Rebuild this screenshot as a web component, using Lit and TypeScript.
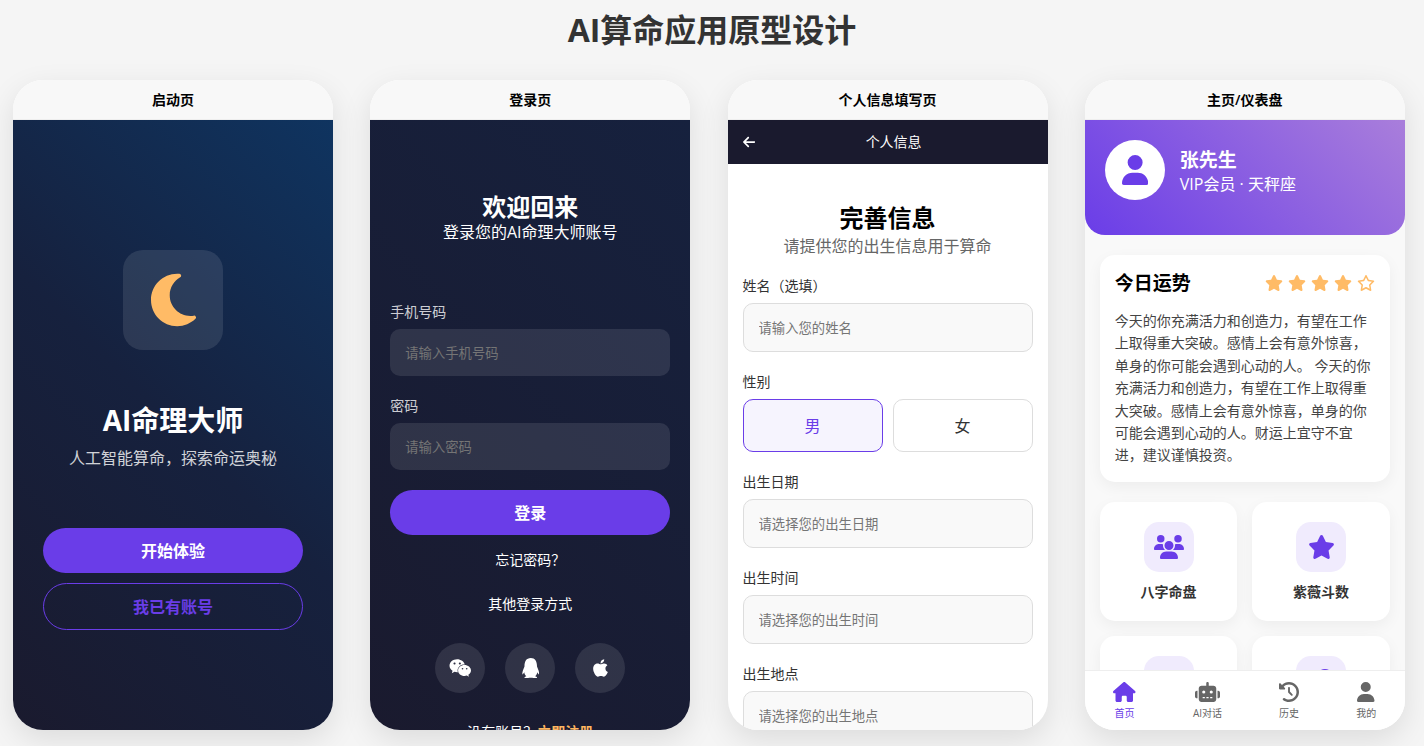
import { LitElement, html, svg, css } from "lit";
import { customElement, property, state } from "lit/decorators.js";
import { classMap } from "lit/directives/class-map.js";

interface Glyph {
  w: number;
  d: string;
}

const GLYPHS: Record<string, Glyph> = {
  moon: { w: 384, d: "M223.5 32C100 32 0 132.3 0 256S100 480 223.5 480c60.6 0 115.5-24.2 155.8-63.4c5-4.9 6.3-12.5 3.1-18.7s-10.1-9.7-17-8.5c-9.8 1.7-19.8 2.6-30.1 2.6c-96.9 0-175.5-78.8-175.5-176c0-65.8 36-123.1 89.3-153.3c6.1-3.5 9.2-10.5 7.7-17.3s-7.3-11.9-14.3-12.5c-6.3-.5-12.6-.8-19-.8z" },
  users: { w: 640, d: "M144 0a80 80 0 1 1 0 160A80 80 0 1 1 144 0zM512 0a80 80 0 1 1 0 160A80 80 0 1 1 512 0zM0 298.7C0 239.8 47.8 192 106.7 192l42.7 0c15.9 0 31 3.5 44.6 9.7c-1.3 7.2-1.9 14.7-1.9 22.3c0 38.2 16.8 72.5 43.3 96c-.2 0-.4 0-.7 0L21.3 320C9.6 320 0 310.4 0 298.7zM405.3 320c-.2 0-.4 0-.7 0c26.6-23.5 43.3-57.8 43.3-96c0-7.6-.7-15-1.9-22.3c13.6-6.3 28.7-9.7 44.6-9.7l42.7 0C592.2 192 640 239.8 640 298.7c0 11.8-9.6 21.3-21.3 21.3l-213.3 0zM224 224a96 96 0 1 1 192 0 96 96 0 1 1 -192 0zM128 485.3C128 411.7 187.7 352 261.3 352l117.3 0C452.3 352 512 411.7 512 485.3c0 14.7-11.9 26.7-26.7 26.7l-330.7 0c-14.7 0-26.7-11.9-26.7-26.7z" },
  star: { w: 576, d: "M316.9 18C311.6 7 300.4 0 288.1 0s-23.4 7-28.8 18L195 150.3 51.4 171.5c-12 1.8-22 10.2-25.7 21.7s-.7 24.2 7.9 32.7L137.8 329 113.2 474.7c-2 12 3 24.2 12.9 31.3s23 8 33.8 2.3l128.3-68.5 128.3 68.5c10.8 5.7 23.9 4.9 33.8-2.3s14.9-19.3 12.9-31.3L438.5 329 542.7 225.9c8.6-8.5 11.7-21.2 7.9-32.7s-13.7-19.9-25.7-21.7L381.2 150.3 316.9 18z" },
  starOutline: { w: 576, d: "M287.9 0c9.2 0 17.6 5.2 21.6 13.5l68.6 141.3 153.2 22.6c9 1.3 16.5 7.6 19.3 16.3s.5 18.1-5.9 24.5L433.6 328.4l26.2 155.6c1.5 9-2.2 18.1-9.7 23.5s-17.3 6-25.3 1.7l-137-73.2L151 509.1c-8.1 4.3-17.9 3.7-25.3-1.7s-11.2-14.5-9.7-23.5l26.2-155.6L31.1 218.2c-6.5-6.4-8.7-15.9-5.9-24.5s10.3-14.9 19.3-16.3l153.2-22.6L266.3 13.5C270.4 5.2 278.7 0 287.9 0zm0 79L235.4 187.2c-3.5 7.1-10.2 12.1-18.1 13.3L99 217.9 184.9 303c5.5 5.5 8.1 13.3 6.8 21L171.4 443.7l105.2-56.2c7.1-3.8 15.6-3.8 22.6 0l105.2 56.2L384.2 324.1c-1.3-7.7 1.2-15.5 6.8-21l85.9-85.1L358.6 200.5c-7.8-1.2-14.6-6.1-18.1-13.3L287.9 79z" },
  user: { w: 448, d: "M224 256A128 128 0 1 0 224 0a128 128 0 1 0 0 256zm-45.7 48C79.8 304 0 383.8 0 482.3C0 498.7 13.3 512 29.7 512l388.6 0c16.4 0 29.7-13.3 29.7-29.7C448 383.8 368.2 304 269.7 304l-91.4 0z" },
  home: { w: 576, d: "M575.8 255.5c0 18-15 32.1-32 32.1l-32 0 .7 160.2c0 2.7-.2 5.4-.5 8.1l0 16.2c0 22.1-17.9 40-40 40l-16 0c-1.1 0-2.2 0-3.3-.1c-1.4 .1-2.8 .1-4.2 .1L416 512l-24 0c-22.1 0-40-17.9-40-40l0-24 0-64c0-17.7-14.3-32-32-32l-64 0c-17.7 0-32 14.3-32 32l0 64 0 24c0 22.1-17.9 40-40 40l-24 0-31.9 0c-1.5 0-3-.1-4.5-.2c-1.2 .1-2.4 .2-3.6 .2l-16 0c-22.1 0-40-17.9-40-40l0-112c0-.9 0-1.9 .1-2.8l0-69.7-32 0c-18 0-32-14-32-32.1c0-9 3-17 10-24L266.4 8c7-7 15-8 22-8s15 2 21 7L564.8 231.5c8 7 12 15 11 24z" },
  robot: { w: 640, d: "M320 0c17.7 0 32 14.3 32 32l0 64 120 0c39.8 0 72 32.2 72 72l0 272c0 39.8-32.2 72-72 72l-304 0c-39.8 0-72-32.2-72-72l0-272c0-39.8 32.2-72 72-72l120 0 0-64c0-17.7 14.3-32 32-32zM208 384c-8.8 0-16 7.2-16 16s7.2 16 16 16l32 0c8.8 0 16-7.2 16-16s-7.2-16-16-16l-32 0zm96 0c-8.8 0-16 7.2-16 16s7.2 16 16 16l32 0c8.8 0 16-7.2 16-16s-7.2-16-16-16l-32 0zm96 0c-8.8 0-16 7.2-16 16s7.2 16 16 16l32 0c8.8 0 16-7.2 16-16s-7.2-16-16-16l-32 0zM264 256a40 40 0 1 0 -80 0 40 40 0 1 0 80 0zm152 40a40 40 0 1 0 0-80 40 40 0 1 0 0 80zM48 224l16 0 0 192-16 0c-26.5 0-48-21.5-48-48l0-96c0-26.5 21.5-48 48-48zm544 0c26.5 0 48 21.5 48 48l0 96c0 26.5-21.5 48-48 48l-16 0 0-192 16 0z" },
  history: { w: 512, d: "M75 75L41 41C25.9 25.9 0 36.6 0 57.9L0 168c0 13.3 10.7 24 24 24l110.1 0c21.4 0 32.1-25.9 17-41l-30.8-30.8C155 85.5 203 64 256 64c106 0 192 86 192 192s-86 192-192 192c-40.8 0-78.6-12.7-109.7-34.4c-14.5-10.1-34.4-6.6-44.6 7.9s-6.6 34.4 7.9 44.6C151.2 495 201.7 512 256 512c141.4 0 256-114.6 256-256S397.4 0 256 0C185.3 0 121.3 28.7 75 75zm181 53c-13.3 0-24 10.7-24 24l0 104c0 6.4 2.5 12.5 7 17l72 72c9.4 9.4 24.6 9.4 33.9 0s9.4-24.6 0-33.9l-65-65 0-94.1c0-13.3-10.7-24-24-24z" },
  arrowLeft: { w: 448, d: "M9.4 233.4c-12.5 12.5-12.5 32.8 0 45.3l160 160c12.5 12.5 32.8 12.5 45.3 0s12.5-32.8 0-45.3L109.2 288 416 288c17.7 0 32-14.3 32-32s-14.3-32-32-32l-306.7 0L214.6 118.6c12.5-12.5 12.5-32.8 0-45.3s-32.8-12.5-45.3 0l-160 160z" },
  weixin: { w: 576, d: "M385.2 167.6c6.4 0 12.6.3 18.8 1.1C387.4 90.3 303.3 32 207.7 32 100.5 32 13 104.8 13 197.4c0 53.4 29.3 97.5 77.9 131.6l-19.3 58.6 68-34.1c24.4 4.8 43.8 9.7 68.2 9.7 6.2 0 12.1-.3 18.3-.8-4-12.9-6.2-26.6-6.2-40.8-.1-84.9 72.9-154 165.3-154zm-104.5-52.9c14.5 0 24.2 9.7 24.2 24.4 0 14.5-9.7 24.2-24.2 24.2-14.8 0-29.3-9.7-29.3-24.2.1-14.7 14.6-24.4 29.3-24.4zm-136.4 48.6c-14.5 0-29.3-9.7-29.3-24.2 0-14.8 14.8-24.4 29.3-24.4 14.8 0 24.4 9.7 24.4 24.4 0 14.6-9.6 24.2-24.4 24.2zM563 319.4c0-77.9-77.9-141.3-165.4-141.3-92.7 0-165.4 63.4-165.4 141.3S305 460.7 397.6 460.7c19.3 0 38.9-5.1 58.6-9.9l53.4 29.3-14.8-48.6C534 402.1 563 363.2 563 319.4zm-219.1-24.5c-9.7 0-19.3-9.7-19.3-19.6 0-9.7 9.7-19.3 19.3-19.3 14.8 0 24.4 9.7 24.4 19.3 0 10-9.7 19.6-24.4 19.6zm107.1 0c-9.7 0-19.3-9.7-19.3-19.6 0-9.7 9.7-19.3 19.3-19.3 14.5 0 24.4 9.7 24.4 19.3.1 10-9.9 19.6-24.4 19.6z" },
  qq: { w: 448, d: "M433.754 420.445c-11.526 1.393-44.86-52.741-44.86-52.741 0 31.345-16.136 72.247-51.051 101.786 16.842 5.192 54.843 19.167 45.803 34.421-7.316 12.343-125.51 7.881-159.632 4.037-34.122 3.844-152.316 8.306-159.632-4.037-9.045-15.25 28.918-29.214 45.783-34.415-34.92-29.539-51.059-70.445-51.059-101.792 0 0-33.334 54.134-44.859 52.741-5.37-.65-12.424-29.644 9.347-99.704 10.261-33.024 21.995-60.478 40.144-105.779C60.683 98.063 108.982.006 224 0c113.737.006 163.156 96.133 160.264 214.963 18.118 45.223 29.912 72.85 40.144 105.778 21.768 70.06 14.716 99.053 9.346 99.704z" },
  apple: { w: 384, d: "M318.7 268.7c-.2-36.7 16.4-64.4 50-84.8-18.8-26.9-47.2-41.7-84.7-44.6-35.5-2.8-74.3 20.7-88.5 20.7-15 0-49.4-19.7-76.4-19.7C63.3 141.2 4 184.8 4 273.5q0 39.3 14.4 81.2c12.8 36.7 59 126.7 107.2 125.2 25.2-.6 43-17.9 75.8-17.9 31.8 0 48.3 17.9 76.4 17.9 48.6-.7 90.4-82.5 102.6-119.3-65.2-30.7-61.7-90-61.7-91.9zm-56.6-164.2c27.3-32.4 24.8-61.9 24-72.5-24.1 1.4-52 16.4-67.9 34.9-17.5 19.8-27.8 44.3-25.6 71.9 26.1 2 49.9-11.4 69.5-34.3z" },
  orbit: { w: 512, d: "M340 0a180 180 0 1 1 0 360 180 180 0 1 1 0-360zM30 440l120-120 50 50-120 120z" },
};

@customElement("app-icon")
export class AppIcon extends LitElement {
  @property() name = "star";

  static styles = css`
    :host {
      display: inline-flex;
      font-size: 20px;
    }
    .glyph {
      display: block;
      height: 1em;
      fill: currentColor;
    }
  `;

  render() {
    const g = GLYPHS[this.name];
    return html`<svg class="glyph" viewBox="0 0 ${g.w} 512" aria-hidden="true">
      ${svg`<path d=${g.d}></path>`}
    </svg>`;
  }
}

@customElement("phone-frame")
export class PhoneFrame extends LitElement {
  @property() heading = "";

  static styles = css`
    :host {
      display: flex;
      flex-direction: column;
      width: 100%;
      max-width: 320px;
      height: 650px;
      border-radius: 30px;
      overflow: hidden;
      background: #fff;
      box-shadow: 0 10px 30px rgba(0, 0, 0, 0.1);
    }
    .caption {
      box-sizing: border-box;
      flex: none;
      height: 40px;
      margin: 0;
      border-bottom: 1px solid #eee;
      background: #f8f8f8;
      font-size: 14px;
      line-height: 39px;
      font-weight: 600;
      text-align: center;
      color: #000;
    }
    .screen {
      flex: 1;
      min-height: 0;
      display: flex;
      flex-direction: column;
      overflow: hidden;
    }
  `;

  render() {
    return html`
      <h2 class="caption">${this.heading}</h2>
      <div class="screen"><slot></slot></div>
    `;
  }
}

@customElement("app-root")
export class AppRoot extends LitElement {
  @state() private gender = "男";
  @state() private tab = "首页";

  static styles = css`
    :host {
      display: block;
      box-sizing: border-box;
      min-height: 100vh;
      padding: 10px 13px 16px;
      background: #f5f5f5;
      color: #000;
      font-family: "Open Sans", "Noto Sans CJK SC", sans-serif;
      font-size: 16px;
      line-height: 24px;
    }
    * {
      box-sizing: border-box;
    }
    h1,
    h3,
    p {
      margin: 0;
    }
    input,
    button {
      font-family: inherit;
    }
    button {
      cursor: pointer;
    }
    a {
      color: inherit;
      text-decoration: none;
    }
    .page-title {
      margin-bottom: 30px;
      font-size: 32px;
      line-height: 40px;
      text-align: center;
      color: #333;
    }
    .phones {
      display: grid;
      grid-template-columns: repeat(auto-fill, minmax(320px, 1fr));
      gap: 31px;
    }

    .splash,
    .login {
      flex: 1;
      display: flex;
      flex-direction: column;
      color: #fff;
    }
    .splash {
      align-items: center;
      padding: 130px 30px 0;
      background: linear-gradient(45deg, #1a1a2e, #16213e, #0f3460);
    }
    .logo {
      display: flex;
      align-items: center;
      justify-content: center;
      width: 100px;
      height: 100px;
      margin-bottom: 50px;
      border-radius: 20px;
      background: rgba(255, 255, 255, 0.1);
      color: #ffbb66;
    }
    .logo app-icon {
      font-size: 60px;
    }
    .splash-title {
      font-size: 28px;
      line-height: 40px;
    }
    .splash-sub {
      margin: 6px 0 58px;
      opacity: 0.8;
    }
    .btn {
      width: 100%;
      height: 45px;
      padding: 0;
      border: 0;
      border-radius: 25px;
      background: #6a3de8;
      color: #fff;
      font-size: 16px;
      line-height: 24px;
      font-weight: 600;
    }
    .btn.outline {
      height: 47px;
      margin-top: 10px;
      border: 1px solid #6a3de8;
      background: transparent;
      color: #6a3de8;
    }

    .login {
      padding: 74px 20px 0;
      background: linear-gradient(45deg, #1a1a2e, #16213e);
    }
    .intro {
      text-align: center;
    }
    .intro-title {
      font-size: 24px;
      line-height: 26px;
    }
    .login .intro {
      margin-bottom: 58px;
    }
    .field {
      display: flex;
      flex-direction: column;
      gap: 8px;
      margin-bottom: 20px;
    }
    .label {
      font-size: 14px;
      line-height: 19px;
      color: #333;
    }
    .login .label {
      color: rgba(255, 255, 255, 0.8);
    }
    .text {
      width: 100%;
      height: 49px;
      padding: 0 15px;
      border: 1px solid #ddd;
      border-radius: 10px;
      background: #f9f9f9;
      color: inherit;
    }
    .text::placeholder {
      color: #757575;
    }
    .login .text {
      height: 47px;
      border: 0;
      background: rgba(255, 255, 255, 0.1);
    }
    .note {
      margin-top: 15px;
      font-size: 14px;
      line-height: 19px;
      text-align: center;
    }
    .note.other {
      margin-top: 25px;
    }
    .socials {
      display: flex;
      justify-content: center;
      gap: 20px;
      margin: 30px 0 14px;
    }
    .social {
      display: flex;
      align-items: center;
      justify-content: center;
      width: 50px;
      height: 50px;
      padding: 0;
      border: 0;
      border-radius: 50%;
      background: rgba(255, 255, 255, 0.1);
      color: #fff;
    }
    .register {
      font-weight: 600;
      color: #ffb660;
    }

    .bar {
      flex: none;
      display: flex;
      align-items: center;
      justify-content: space-between;
      height: 44px;
      padding: 0 15px;
      background: #1a1a2e;
      color: #fff;
      font-size: 14px;
    }
    .back {
      display: flex;
      padding: 0;
      border: 0;
      background: none;
      color: inherit;
    }
    .back app-icon {
      font-size: 14px;
    }
    .form {
      flex: none;
      padding: 38px 15px 0;
    }
    .form .intro {
      margin-bottom: 18px;
    }
    .form .intro-title {
      line-height: 32px;
    }
    .form .intro p {
      color: #666;
    }
    .choices {
      display: flex;
      gap: 10px;
    }
    .choice {
      flex: 1;
      display: flex;
      align-items: center;
      justify-content: center;
      height: 53px;
      border: 1px solid #ddd;
      border-radius: 10px;
      color: #333;
      cursor: pointer;
    }
    .choice.on {
      border-color: #6a3de8;
      background: #f6f4fe;
      color: #6a3de8;
    }
    .choice input {
      appearance: none;
      width: 0;
      height: 0;
      margin: 0;
    }

    .home {
      flex: 1;
      min-height: 0;
      overflow: hidden;
      background: #f9f9f9;
    }
    .profile {
      display: flex;
      gap: 15px;
      height: 115px;
      padding: 20px;
      border-radius: 0 0 20px 20px;
      background: linear-gradient(45deg, #6a3de8, #a97edb);
      color: #fff;
    }
    .avatar {
      display: flex;
      align-items: center;
      justify-content: center;
      width: 60px;
      height: 60px;
      border-radius: 50%;
      background: #fff;
      color: #6a3de8;
    }
    .avatar app-icon {
      font-size: 30px;
    }
    .who {
      padding-top: 8px;
    }
    .name,
    .card-title {
      font-size: 19px;
      line-height: 24px;
    }
    .card,
    .tile {
      border-radius: 15px;
      background: #fff;
      box-shadow: 0 5px 15px rgba(0, 0, 0, 0.05);
    }
    .card {
      margin: 20px 15px;
      padding: 15px;
    }
    .card-head {
      display: flex;
      align-items: center;
      justify-content: space-between;
      margin-bottom: 14px;
    }
    .card-head h3 {
      line-height: 26px;
    }
    .stars {
      display: flex;
      gap: 5px;
      color: #ffbb66;
    }
    .stars app-icon {
      font-size: 16px;
    }
    .fortune {
      font-size: 14px;
      line-height: 1.6;
      color: #444;
    }
    .tiles {
      display: grid;
      grid-template-columns: 1fr 1fr;
      gap: 15px;
      padding: 0 15px;
    }
    .tile {
      display: flex;
      flex-direction: column;
      align-items: center;
      gap: 10px;
      height: 119px;
      padding: 20px 0;
      border: 0;
      color: #333;
      font-size: 14px;
      line-height: 19px;
      font-weight: 600;
    }
    .tile-icon {
      display: flex;
      align-items: center;
      justify-content: center;
      width: 50px;
      height: 50px;
      border-radius: 15px;
      background: #f0ebfd;
      color: #6a3de8;
    }
    .tile-icon app-icon {
      font-size: 24px;
    }
    .tabs {
      flex: none;
      display: flex;
      align-items: center;
      justify-content: space-around;
      height: 60px;
      border-top: 1px solid #eee;
      background: #fff;
    }
    .tab {
      display: flex;
      flex-direction: column;
      align-items: center;
      gap: 4px;
      padding: 0;
      border: 0;
      background: none;
      color: #666;
      font-size: 10px;
      line-height: 14px;
    }
    .tab.on {
      color: #6a3de8;
    }
  `;

  private field(id: string, label: string, hint: string, type = "text") {
    return html`
      <div class="field">
        <label class="label" for=${id}>${label}</label>
        <input class="text" id=${id} type=${type} placeholder=${hint} />
      </div>
    `;
  }

  private splash() {
    return html`
      <phone-frame heading="启动页">
        <div class="splash">
          <div class="logo"><app-icon name="moon"></app-icon></div>
          <h3 class="splash-title">AI命理大师</h3>
          <p class="splash-sub">人工智能算命，探索命运奥秘</p>
          <button class="btn">开始体验</button>
          <button class="btn outline">我已有账号</button>
        </div>
      </phone-frame>
    `;
  }

  private login() {
    const socials = [
      ["weixin", "微信"],
      ["qq", "QQ"],
      ["apple", "Apple"],
    ];
    return html`
      <phone-frame heading="登录页">
        <div class="login">
          <div class="intro">
            <h3 class="intro-title">欢迎回来</h3>
            <p>登录您的AI命理大师账号</p>
          </div>
          ${this.field("phone", "手机号码", "请输入手机号码", "tel")}
          ${this.field("password", "密码", "请输入密码", "password")}
          <button class="btn">登录</button>
          <p class="note"><a href="#forgot">忘记密码？</a></p>
          <p class="note other">其他登录方式</p>
          <div class="socials">
            ${socials.map(
              ([icon, label]) => html`
                <button class="social" aria-label=${label}>
                  <app-icon name=${icon}></app-icon>
                </button>
              `
            )}
          </div>
          <p class="note">没有账号？<a class="register" href="#register">立即注册</a></p>
        </div>
      </phone-frame>
    `;
  }

  private info() {
    return html`
      <phone-frame heading="个人信息填写页">
        <div class="bar">
          <button class="back" aria-label="返回"><app-icon name="arrowLeft"></app-icon></button>
          <span>个人信息</span>
          <span></span>
        </div>
        <div class="form">
          <div class="intro">
            <h3 class="intro-title">完善信息</h3>
            <p>请提供您的出生信息用于算命</p>
          </div>
          ${this.field("name", "姓名（选填）", "请输入您的姓名")}
          <div class="field" role="radiogroup" aria-labelledby="gender-label">
            <span class="label" id="gender-label">性别</span>
            <div class="choices">
              ${["男", "女"].map(
                (g) => html`
                  <label class=${classMap({ choice: true, on: this.gender === g })}>
                    <input
                      type="radio"
                      name="gender"
                      .checked=${this.gender === g}
                      @change=${() => (this.gender = g)}
                    />${g}
                  </label>
                `
              )}
            </div>
          </div>
          ${this.field("birth-date", "出生日期", "请选择您的出生日期")}
          ${this.field("birth-time", "出生时间", "请选择您的出生时间")}
          ${this.field("birth-place", "出生地点", "请选择您的出生地点")}
        </div>
      </phone-frame>
    `;
  }

  private home() {
    const tiles = [
      ["users", "八字命盘"],
      ["star", "紫薇斗数"],
      ["moon", ""],
      ["orbit", ""],
    ];
    const tabs = [
      ["home", "首页"],
      ["robot", "AI对话"],
      ["history", "历史"],
      ["user", "我的"],
    ];
    return html`
      <phone-frame heading="主页/仪表盘">
        <div class="home">
          <div class="profile">
            <div class="avatar"><app-icon name="user"></app-icon></div>
            <div class="who">
              <h3 class="name">张先生</h3>
              <p>VIP会员 · 天秤座</p>
            </div>
          </div>
          <section class="card">
            <div class="card-head">
              <h3 class="card-title">今日运势</h3>
              <div class="stars" role="img" aria-label="4 / 5">
                ${[1, 2, 3, 4, 5].map(
                  (n) => html`<app-icon name=${n <= 4 ? "star" : "starOutline"}></app-icon>`
                )}
              </div>
            </div>
            <p class="fortune">
              今天的你充满活力和创造力，有望在工作上取得重大突破。感情上会有意外惊喜，单身的你可能会遇到心动的人。
              今天的你充满活力和创造力，有望在工作上取得重大突破。感情上会有意外惊喜，单身的你可能会遇到心动的人。财运上宜守不宜进，建议谨慎投资。
            </p>
          </section>
          <div class="tiles">
            ${tiles.map(
              ([icon, label]) => html`
                <button class="tile">
                  <span class="tile-icon"><app-icon name=${icon}></app-icon></span>
                  <span>${label}</span>
                </button>
              `
            )}
          </div>
        </div>
        <nav class="tabs">
          ${tabs.map(
            ([icon, label]) => html`
              <button
                class=${classMap({ tab: true, on: this.tab === label })}
                @click=${() => (this.tab = label)}
              >
                <app-icon name=${icon}></app-icon>
                <span>${label}</span>
              </button>
            `
          )}
        </nav>
      </phone-frame>
    `;
  }

  render() {
    return html`
      <h1 class="page-title">AI算命应用原型设计</h1>
      <main class="phones">
        ${this.splash()} ${this.login()} ${this.info()} ${this.home()}
      </main>
    `;
  }
}
